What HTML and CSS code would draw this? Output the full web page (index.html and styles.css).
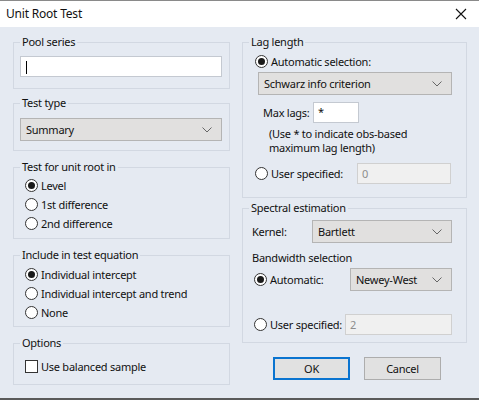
FILE: index.html
```html
<!DOCTYPE html>
<html>
<head>
<meta charset="utf-8">
<title>Unit Root Test</title>
<link rel="stylesheet" href="styles.css">
</head>
<body>
<div class="window">
  <div class="titlebar">
    <span class="title">Unit Root Test</span>
    <svg class="close" width="12" height="12" viewBox="0 0 12 12"><path d="M1 1L11 11M11 1L1 11" stroke="#111" stroke-width="1.1" fill="none"/></svg>
  </div>
  <div class="client">
    <div class="col col-left">
      <fieldset class="grp g-pool">
        <legend>Pool series</legend>
        <div class="edit edit-pool"><span class="caret"></span></div>
      </fieldset>
      <fieldset class="grp g-type">
        <legend>Test type</legend>
        <div class="combo combo-type"><span class="combo-text">Summary</span><svg class="chev" width="10" height="6" viewBox="0 0 10 6"><path d="M0.5 0.5L5 5L9.5 0.5" stroke="#666" fill="none"/></svg></div>
      </fieldset>
      <fieldset class="grp g-root">
        <legend>Test for unit root in</legend>
        <div class="opts">
          <div class="opt"><span class="radio on"></span><span>Level</span></div>
          <div class="opt"><span class="radio"></span><span>1st difference</span></div>
          <div class="opt"><span class="radio"></span><span>2nd difference</span></div>
        </div>
      </fieldset>
      <fieldset class="grp g-incl">
        <legend>Include in test equation</legend>
        <div class="opts">
          <div class="opt"><span class="radio on"></span><span>Individual intercept</span></div>
          <div class="opt"><span class="radio"></span><span>Individual intercept and trend</span></div>
          <div class="opt"><span class="radio"></span><span>None</span></div>
        </div>
      </fieldset>
      <fieldset class="grp g-options">
        <legend>Options</legend>
        <div class="opt"><span class="check"></span><span>Use balanced sample</span></div>
      </fieldset>
    </div>
    <div class="col col-right">
      <fieldset class="grp g-lag">
        <legend>Lag length</legend>
        <div class="opt opt-r"><span class="radio on"></span><span>Automatic selection:</span></div>
        <div class="combo combo-crit"><span class="combo-text">Schwarz info criterion</span><svg class="chev" width="10" height="6" viewBox="0 0 10 6"><path d="M0.5 0.5L5 5L9.5 0.5" stroke="#666" fill="none"/></svg></div>
        <div class="row row-maxlag"><span class="lbl">Max lags:</span><div class="edit edit-maxlag">*</div></div>
        <div class="note">(Use * to indicate obs-based<br>maximum lag length)</div>
        <div class="row row-user1"><div class="opt opt-r w-user1"><span class="radio"></span><span>User specified:</span></div><div class="edit disabled edit-user1">0</div></div>
      </fieldset>
      <fieldset class="grp g-spec">
        <legend>Spectral estimation</legend>
        <div class="row row-kernel"><span class="lbl w-kernel">Kernel:</span><div class="combo combo-kernel"><span class="combo-text">Bartlett</span><svg class="chev" width="10" height="6" viewBox="0 0 10 6"><path d="M0.5 0.5L5 5L9.5 0.5" stroke="#666" fill="none"/></svg></div></div>
        <div class="sub">Bandwidth selection</div>
        <div class="row row-auto"><div class="opt opt-r w-auto"><span class="radio on"></span><span>Automatic:</span></div><div class="combo combo-bw"><span class="combo-text">Newey-West</span><svg class="chev" width="10" height="6" viewBox="0 0 10 6"><path d="M0.5 0.5L5 5L9.5 0.5" stroke="#666" fill="none"/></svg></div></div>
        <div class="row row-user2"><div class="opt opt-r w-user2"><span class="radio"></span><span>User specified:</span></div><div class="edit disabled edit-user2">2</div></div>
      </fieldset>
      <div class="buttons">
        <div class="btn btn-default">OK</div>
        <div class="btn">Cancel</div>
      </div>
    </div>
  </div>
</div>
</body>
</html>
```

FILE: styles.css
```css
html, body {
  margin: 0;
  padding: 0;
  background: #e5eaf2;
}
body {
  font-family: "Noto Sans", "DejaVu Sans", sans-serif;
  font-size: 11px;
  letter-spacing: -0.25px;
  color: #111;
  white-space: nowrap;
}
.window {
  width: 479px;
  height: 400px;
  box-sizing: border-box;
  background: #e5eaf2;
  border-bottom: 2px solid #5a5a5a;
  overflow: hidden;
}
.titlebar {
  height: 27px;
  background: #fff;
  border-top: 1px solid #8a8a8a;
  box-sizing: border-box;
  display: flex;
  align-items: center;
  padding: 0 12px 0 6px;
}
.title {
  font-size: 12px;
  flex: 1;
  line-height: 16px;
  letter-spacing: -0.2px;
}
.close {
  display: block;
}
.client {
  display: flex;
  gap: 12px;
  padding: 7px 0 0 13px;
}
.col {
  display: flex;
  flex-direction: column;
}
.col-left { width: 217px; }
.col-right { width: 225px; }
.grp {
  margin: 0;
  padding: 0 6px;
  border: 1px solid #d2d8e2;
  min-width: 0;
}
.grp legend {
  padding: 0 2px;
  line-height: 16px;
  font-size: 11px;
}
.edit {
  box-sizing: border-box;
  height: 21px;
  background: #fff;
  border: 1px solid #c4c9d1;
  line-height: 19px;
  padding-left: 4px;
  font-size: 11px;
  flex: none;
}
.edit.disabled {
  background: #f0f0f0;
  border-color: #d0d0d0;
  color: #8d8d8d;
}
.caret {
  display: inline-block;
  width: 1px;
  height: 13px;
  background: #000;
  vertical-align: middle;
  margin-left: 1px;
  margin-top: -2px;
}
.combo {
  box-sizing: border-box;
  height: 23px;
  background: #e1e0df;
  border: 1px solid #b4b4b4;
  display: flex;
  align-items: center;
  padding: 0 9px 0 5px;
  flex: none;
}
.combo-text { flex: 1; }
.chev { display: block; }

.g-pool { padding-bottom: 11px; }
.edit-pool { margin-top: 6px; width: 202px; }
.g-type { margin-top: 6px; padding-bottom: 9px; }
.combo-type { margin-top: 7px; width: 202px; }
.g-root { margin-top: 8px; padding-bottom: 5px; }
.g-root .opts { margin-top: 1px; }
.g-incl { margin-top: 8px; padding-bottom: 4px; }
.g-incl .opts { margin-top: 2px; }
.g-options { margin-top: 8px; padding-bottom: 8px; }
.g-options .opt { margin-top: 6px; }

.opt {
  display: flex;
  align-items: center;
  height: 19px;
  padding-left: 5px;
  flex: none;
}
.opt-r { padding-left: 6px; }
.radio {
  box-sizing: border-box;
  width: 13px;
  height: 13px;
  border: 1px solid #333;
  border-radius: 50%;
  background: #fff;
  margin-right: 3px;
  flex: none;
  display: flex;
  align-items: center;
  justify-content: center;
}
.radio.on::after {
  content: "";
  width: 7px;
  height: 7px;
  border-radius: 50%;
  background: #1a1a1a;
}
.check {
  box-sizing: border-box;
  width: 13px;
  height: 13px;
  border: 1px solid #333;
  background: #fff;
  margin-right: 3px;
  flex: none;
}

.row {
  display: flex;
  align-items: center;
}
.lbl { flex: none; }
.g-lag { padding-bottom: 13px; }
.g-lag > .opt-r { margin-top: 2px; }
.combo-crit { margin: 1px 0 0 9px; width: 194px; }
.row-maxlag { margin-top: 7px; padding-left: 14px; }
.row-maxlag .lbl { width: 50px; }
.edit-maxlag { width: 46px; line-height: 17px; }
.note { margin: 4px 0 0 20px; line-height: 14px; }
.row-user1 { margin-top: 8px; }
.w-user1 { width: 108px; box-sizing: border-box; }
.edit-user1 { width: 94px; }

.g-spec { margin-top: 2px; padding-bottom: 7px; }
.row-kernel { margin-top: 4px; padding-left: 3px; }
.w-kernel { width: 60px; }
.combo-kernel { width: 140px; }
.sub { margin-top: 7px; padding-left: 3px; line-height: 16px; }
.row-auto { margin-top: 2px; }
.opt.w-auto, .opt.w-user2 { padding-left: 5px; box-sizing: border-box; }
.w-auto { width: 101px; }
.combo-bw { width: 102px; }
.row-user2 { margin-top: 23px; }
.w-user2 { width: 96px; }
.edit-user2 { width: 107px; }

.buttons {
  display: flex;
  gap: 14px;
  margin: 14px 0 0 31px;
}
.btn {
  box-sizing: border-box;
  width: 77px;
  height: 23px;
  background: #e1e1e1;
  border: 1px solid #adadad;
  display: flex;
  align-items: center;
  justify-content: center;
}
.btn-default {
  border: 2px solid #0a74d0;
}
```
